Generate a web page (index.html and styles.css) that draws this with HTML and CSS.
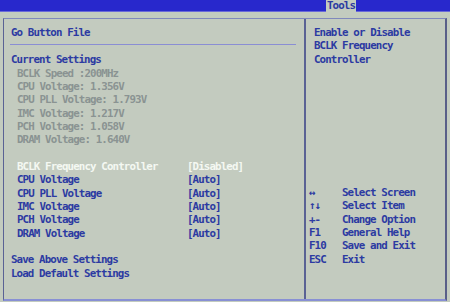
FILE: index.html
```html
<!DOCTYPE html>
<html lang="en">
<head>
  <meta charset="UTF-8">
  <title>Go Button File</title>
  <link rel="stylesheet" href="styles.css">
</head>
<body>

<div class="menubar">
  <span class="tab">Tools</span>
</div>

<div class="frame">
  <div class="main">
    <div class="row title">Go Button File</div>
    <div class="rule"></div>
    <div class="row">Current Settings</div>
    <div class="info">
      <div class="row">BCLK Speed :200MHz</div>
      <div class="row">CPU Voltage: 1.356V</div>
      <div class="row">CPU PLL Voltage: 1.793V</div>
      <div class="row">IMC Voltage: 1.217V</div>
      <div class="row">PCH Voltage: 1.058V</div>
      <div class="row">DRAM Voltage: 1.640V</div>
    </div>
    <div class="row"></div>
    <div class="options">
      <div class="row opt selected"><span>BCLK Frequency Controller</span><span>[Disabled]</span></div>
      <div class="row opt"><span>CPU Voltage</span><span>[Auto]</span></div>
      <div class="row opt"><span>CPU PLL Voltage</span><span>[Auto]</span></div>
      <div class="row opt"><span>IMC Voltage</span><span>[Auto]</span></div>
      <div class="row opt"><span>PCH Voltage</span><span>[Auto]</span></div>
      <div class="row opt"><span>DRAM Voltage</span><span>[Auto]</span></div>
    </div>
    <div class="row"></div>
    <div class="row">Save Above Settings</div>
    <div class="row">Load Default Settings</div>
  </div>

  <div class="side">
    <div class="help">
      <div class="row">Enable or Disable</div>
      <div class="row">BCLK Frequency</div>
      <div class="row">Controller</div>
    </div>
    <div class="keys">
      <div class="row key"><span>&harr;</span><span>Select Screen</span></div>
      <div class="row key"><span>&uarr;&darr;</span><span>Select Item</span></div>
      <div class="row key"><span>+-</span><span>Change Option</span></div>
      <div class="row key"><span>F1</span><span>General Help</span></div>
      <div class="row key"><span>F10</span><span>Save and Exit</span></div>
      <div class="row key"><span>ESC</span><span>Exit</span></div>
    </div>
  </div>
</div>

</body>
</html>
```

FILE: styles.css
```css
body {
  margin: 0;
  width: 450px;
  height: 302px;
  background: #c3cbbf;
  font-family: "DejaVu Sans Mono", monospace;
  font-weight: bold;
  font-size: 10.8px;
  letter-spacing: -0.88px;
  color: #2c3aa2;
  overflow: hidden;
}
.menubar {
  height: 11px;
  background: #2828cc;
  border-bottom: 1px solid #6a6ad8;
  display: flex;
  padding-left: 326px;
}
.tab {
  width: 29px;
  height: 12px;
  background: #c3cbbf;
  line-height: 12px;
  padding-left: 1px;
}
.frame {
  margin: 6px 3px 0 3px;
  height: 280px;
  border-top: 1px solid #8088bc;
  border-left: 1px solid #5a6294;
  border-right: 2px solid #585e88;
  border-bottom: 2px solid #8890d4;
  display: grid;
  grid-template-columns: 302px 1fr;
}
.row {
  height: 13.33px;
  line-height: 13.33px;
  white-space: pre;
}
.main {
  padding: 7px 8px 0 7px;
  border-right: 2px solid #5a6294;
}
.rule {
  height: 1px;
  background: #8a8ed4;
  margin: 5px 0 8px -1px;
}
.info {
  padding-left: 6px;
  color: #8a9392;
}
.options {
  padding-left: 6px;
}
.opt {
  display: grid;
  grid-template-columns: 170px auto;
}
.selected {
  color: #f4f8f2;
}
.side {
  padding: 7px 0 0 8px;
}
.keys {
  margin-top: 120px;
  margin-left: -5px;
}
.key {
  display: grid;
  grid-template-columns: 33px auto;
}
```
